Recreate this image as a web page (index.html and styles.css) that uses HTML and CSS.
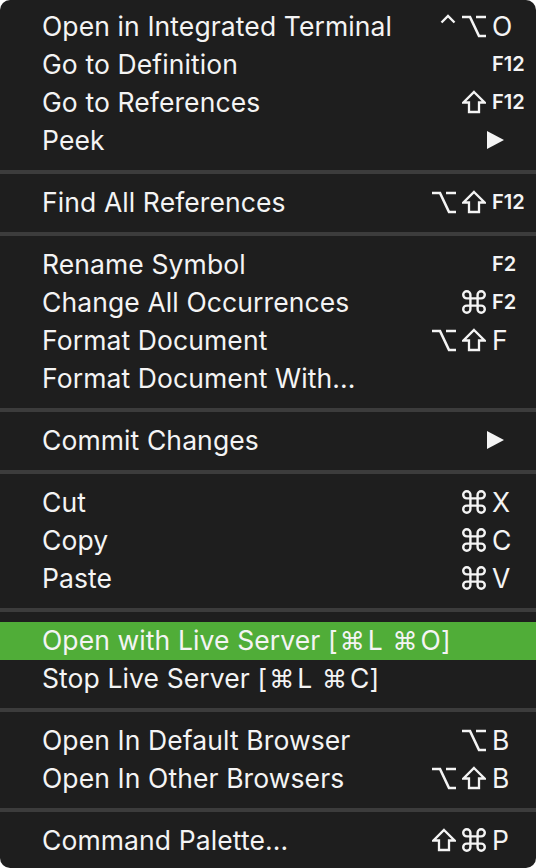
FILE: index.html
```html
<!DOCTYPE html>
<html lang="en">
<head>
<meta charset="utf-8">
<title>Context Menu</title>
<link rel="stylesheet" href="styles.css">
</head>
<body>
<svg width="0" height="0" class="defs" aria-hidden="true">
  <defs>
    <symbol id="i-ctrl" viewBox="0 0 16 24"><path d="M1.5 8.5 L8 2 L14.5 8.5" fill="none" stroke="currentColor" stroke-width="2.4" stroke-linejoin="miter"/></symbol>
    <symbol id="i-opt" viewBox="0 0 24 24"><path d="M0 3 H8 L17 22 H24 M14 3 H24" fill="none" stroke="currentColor" stroke-width="2.6"/></symbol>
    <symbol id="i-shift" viewBox="0 0 24 24"><path d="M12 2 L22.5 12.5 H17 V22 H7 V12.5 H1.5 Z" fill="none" stroke="currentColor" stroke-width="2.3" stroke-linejoin="miter"/></symbol>
    <symbol id="i-cmd" viewBox="2 2 20 20"><path d="M15 6v12a3 3 0 1 0 3-3H6a3 3 0 1 0 3 3V6a3 3 0 1 0-3 3h12a3 3 0 1 0-3-3" fill="none" stroke="currentColor" stroke-width="2"/></symbol>
  </defs>
</svg>
<div class="menu">
  <div class="item"><span class="label">Open in Integrated Terminal</span><span class="mods"><svg class="mod ctrl"><use href="#i-ctrl"/></svg><svg class="mod"><use href="#i-opt"/></svg></span><span class="key">O</span></div>
  <div class="item"><span class="label">Go to Definition</span><span class="mods"></span><span class="key fn">F12</span></div>
  <div class="item"><span class="label">Go to References</span><span class="mods"><svg class="mod"><use href="#i-shift"/></svg></span><span class="key fn">F12</span></div>
  <div class="item"><span class="label">Peek</span><span class="mods"></span><span class="key"><svg class="arrow" viewBox="0 0 17 18"><path d="M0 0 L17 9 L0 18 Z" fill="currentColor"/></svg></span></div>
  <div class="sep"></div>
  <div class="item"><span class="label">Find All References</span><span class="mods"><svg class="mod"><use href="#i-opt"/></svg><svg class="mod"><use href="#i-shift"/></svg></span><span class="key fn">F12</span></div>
  <div class="sep"></div>
  <div class="item"><span class="label">Rename Symbol</span><span class="mods"></span><span class="key fn">F2</span></div>
  <div class="item"><span class="label">Change All Occurrences</span><span class="mods"><svg class="mod"><use href="#i-cmd"/></svg></span><span class="key fn">F2</span></div>
  <div class="item"><span class="label">Format Document</span><span class="mods"><svg class="mod"><use href="#i-opt"/></svg><svg class="mod"><use href="#i-shift"/></svg></span><span class="key">F</span></div>
  <div class="item"><span class="label">Format Document With...</span></div>
  <div class="sep"></div>
  <div class="item"><span class="label">Commit Changes</span><span class="mods"></span><span class="key"><svg class="arrow" viewBox="0 0 17 18"><path d="M0 0 L17 9 L0 18 Z" fill="currentColor"/></svg></span></div>
  <div class="sep"></div>
  <div class="item"><span class="label">Cut</span><span class="mods"><svg class="mod"><use href="#i-cmd"/></svg></span><span class="key">X</span></div>
  <div class="item"><span class="label">Copy</span><span class="mods"><svg class="mod"><use href="#i-cmd"/></svg></span><span class="key">C</span></div>
  <div class="item"><span class="label">Paste</span><span class="mods"><svg class="mod"><use href="#i-cmd"/></svg></span><span class="key">V</span></div>
  <div class="sep"></div>
  <div class="item active"><span class="label">Open with Live Server [<span class="cmd">⌘</span>L <span class="cmd">⌘</span>O]</span></div>
  <div class="item"><span class="label">Stop Live Server [<span class="cmd">⌘</span>L <span class="cmd">⌘</span>C]</span></div>
  <div class="sep"></div>
  <div class="item"><span class="label">Open In Default Browser</span><span class="mods"><svg class="mod"><use href="#i-opt"/></svg></span><span class="key">B</span></div>
  <div class="item"><span class="label">Open In Other Browsers</span><span class="mods"><svg class="mod"><use href="#i-opt"/></svg><svg class="mod"><use href="#i-shift"/></svg></span><span class="key">B</span></div>
  <div class="sep"></div>
  <div class="item"><span class="label">Command Palette...</span><span class="mods"><svg class="mod"><use href="#i-shift"/></svg><svg class="mod"><use href="#i-cmd"/></svg></span><span class="key">P</span></div>
</div>
</body>
</html>
```

FILE: styles.css
```css
html, body {
  margin: 0;
  padding: 0;
  background: #ffffff;
}
.defs {
  position: absolute;
  width: 0;
  height: 0;
  overflow: hidden;
}
.menu {
  width: 536px;
  height: 868px;
  box-sizing: border-box;
  background: #1e1e1e;
  border-radius: 10px;
  padding: 8px 0;
  color: #f4f4f4;
  font-family: Inter, "Noto Sans", "DejaVu Sans", sans-serif;
  font-size: 26.5px;
  letter-spacing: 0.1px;
  overflow: hidden;
}
.item {
  display: flex;
  align-items: center;
  height: 38px;
  box-sizing: border-box;
  padding-left: 42px;
  padding-bottom: 2px;
}
.item.active {
  background: #50ad38;
}
.label {
  flex: 1;
  white-space: nowrap;
}
.cmd {
  font-family: "DejaVu Sans", sans-serif;
  font-size: 25px;
  padding: 0 3px 0 2px;
}
.mods {
  display: flex;
  align-items: center;
  gap: 6px;
  margin-right: 6px;
}
.mod {
  width: 24px;
  height: 24px;
  color: #f4f4f4;
}
.mod.ctrl {
  width: 16px;
  align-self: flex-start;
}
.key {
  width: 44px;
  display: flex;
  align-items: center;
  letter-spacing: 0;
}
.key.fn {
  font-size: 20px;
  font-weight: 600;
}
.arrow {
  width: 17px;
  height: 18px;
  margin-left: -5px;
}
.sep {
  height: 4px;
  margin: 10px 0;
  background: #3c3c3c;
}
```
